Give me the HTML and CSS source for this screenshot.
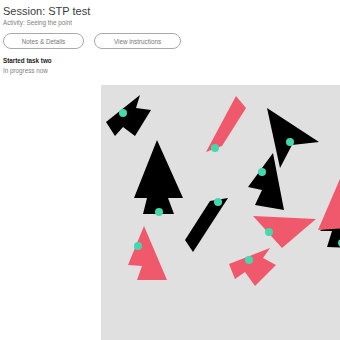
FILE: index.html
```html
<!DOCTYPE html>
<html>
<head>
<meta charset="utf-8">
<link rel="stylesheet" href="styles.css">
</head>
<body>
<div class="page">
  <h1 class="title">Session: STP test</h1>
  <div class="activity">Activity: Seeing the point</div>
  <div class="buttons">
    <button class="btn btn-notes">Notes &amp; Details</button>
    <button class="btn btn-instr">View instructions</button>
  </div>
  <div class="status">Started task two</div>
  <div class="sub">In progress now</div>
  <div class="canvas">
    <svg class="board" viewBox="101 85 239 255" width="239" height="255">
      <g class="black">
        <polygon points="140,95 136,108 151,110 135,136 123,127 115,136 106,122"/>
        <polygon points="267,108 319,142 292,145 280,168"/>
        <polygon points="157,140 183,198 168,198 174,214 143,214 147,198 134,198"/>
        <polygon points="210,201 228,198 193,252 185,240"/>
        <polygon points="273,153 284,210 255,205 262,190 248,187"/>
        <polygon points="348,205 320,231 332,231 327,247 348,248"/>
      </g>
      <g class="pink">
        <polygon points="236,96 246,108 222,146 206,152"/>
        <polygon points="253,216 316,219 282,248"/>
        <polygon points="144,226 167,280 137,280 142,266 128,265"/>
        <polygon points="270,248 263,258 276,265 255,286 245,272 235,279 229,264"/>
        <polygon points="348,160 348,228 318,230"/>
      </g>
      <g class="dots">
        <circle cx="123" cy="113" r="4"/>
        <circle cx="215" cy="148" r="4"/>
        <circle cx="290" cy="142" r="4"/>
        <circle cx="262" cy="172" r="4"/>
        <circle cx="159" cy="212" r="4"/>
        <circle cx="218" cy="202" r="4"/>
        <circle cx="269" cy="232" r="4"/>
        <circle cx="138" cy="246" r="4"/>
        <circle cx="249" cy="260" r="4"/>
        <circle cx="342" cy="243" r="4"/>
      </g>
    </svg>
  </div>
</div>
</body>
</html>
```
FILE: styles.css
```css
html, body {
  margin: 0;
  padding: 0;
  overflow: hidden;
  background: #fff;
}
.page {
  padding: 0 0 0 3px;
  font-family: "Liberation Sans", Arial, sans-serif;
  color: #333;
}
.title {
  margin: 5px 0 0 0;
  font-size: 11px;
  line-height: 12px;
  font-weight: normal;
  color: #3c3c3c;
}
.activity {
  margin-top: 2px;
  font-size: 6.3px;
  line-height: 8px;
  color: #808080;
}
.buttons {
  display: flex;
  gap: 10px;
  margin-top: 6px;
}
.btn {
  box-sizing: border-box;
  height: 16px;
  padding: 0;
  border: 1px solid #aaa;
  border-radius: 8px;
  background: #fff;
  font-family: "Liberation Sans", Arial, sans-serif;
  font-size: 6.3px;
  color: #777;
  text-align: center;
}
.btn-notes { width: 81px; }
.btn-instr { width: 87px; }
.status {
  margin-top: 8px;
  font-size: 6.3px;
  line-height: 8px;
  font-weight: bold;
  color: #222;
}
.sub {
  margin-top: 2px;
  font-size: 6.3px;
  line-height: 8px;
  color: #808080;
}
.canvas {
  margin: 10px 0 0 98px;
  width: 239px;
  height: 255px;
  background: #e0e0e0;
  overflow: hidden;
}
.board {
  display: block;
}
.black polygon {
  fill: #000;
}
.pink polygon {
  fill: #f0586c;
}
.dots circle {
  fill: #45d8ae;
}
```
